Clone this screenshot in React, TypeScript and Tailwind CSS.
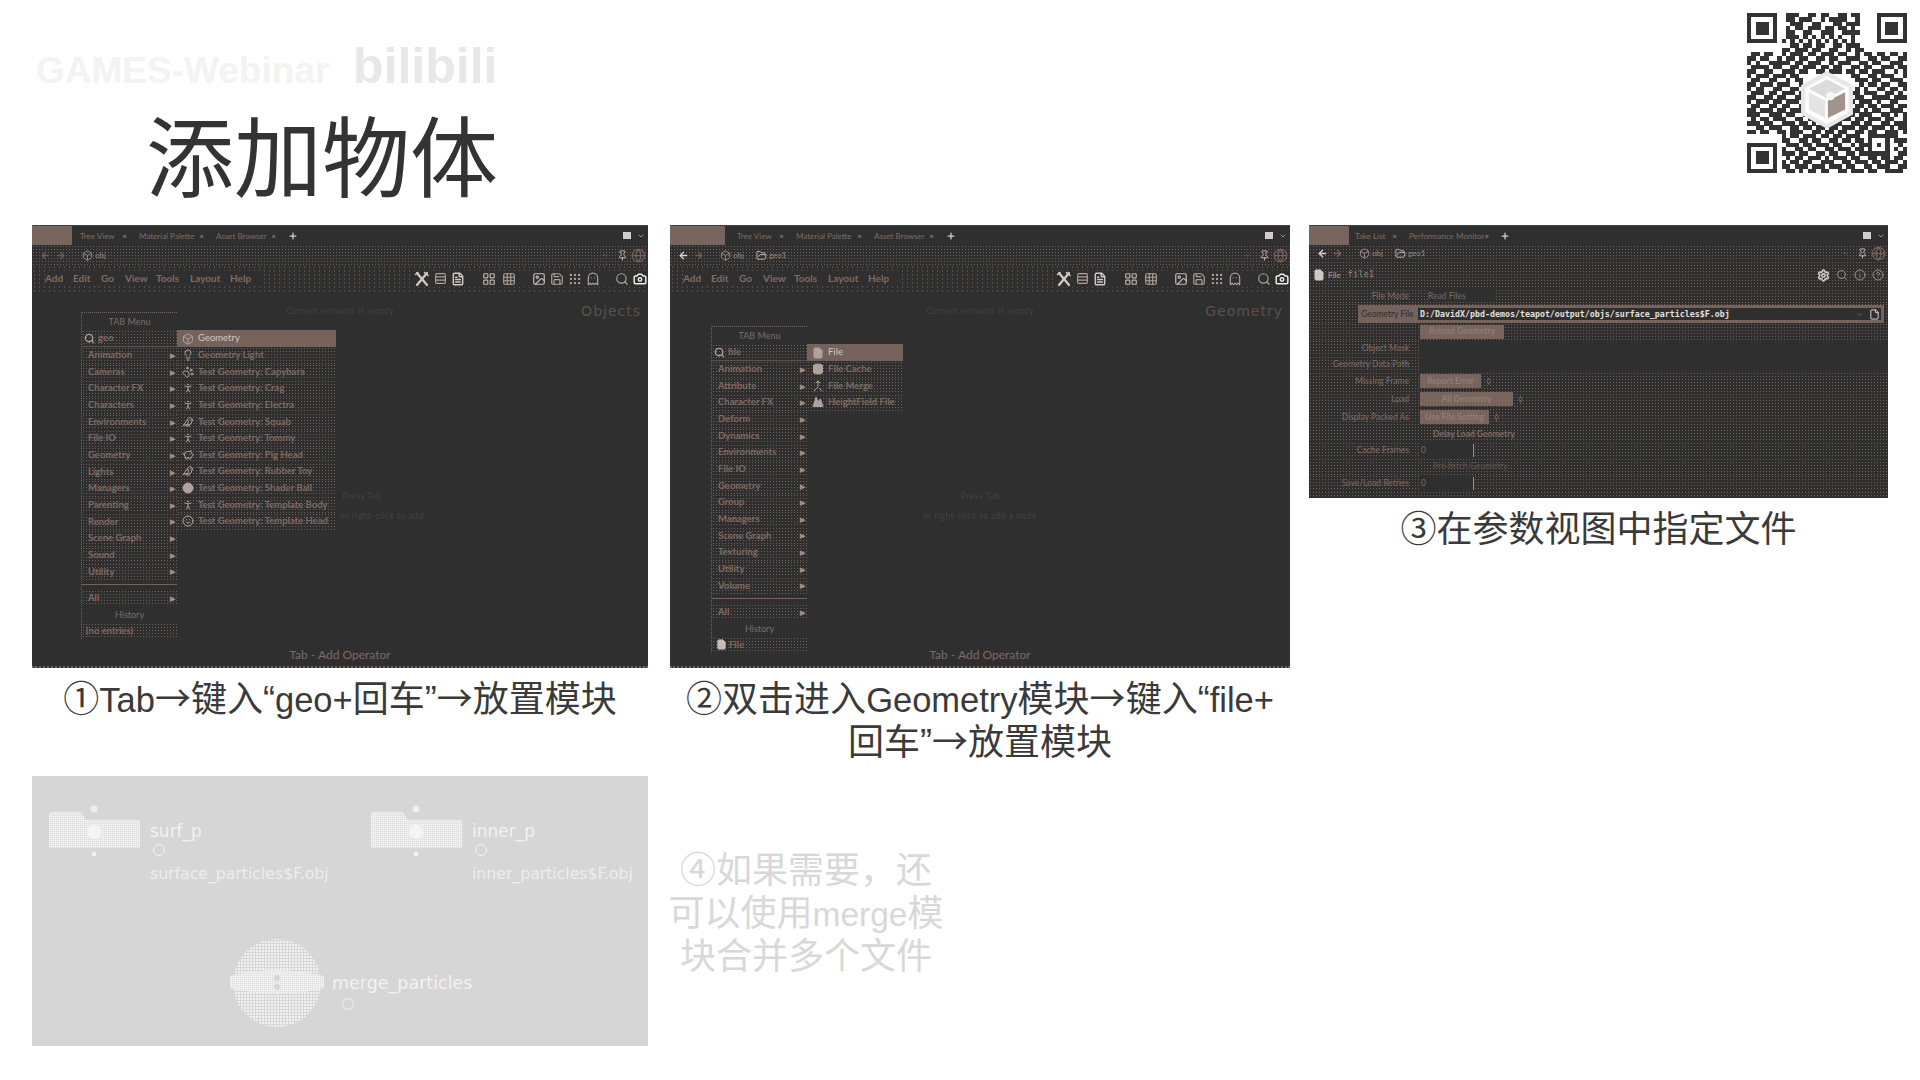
import React from "react";
import {
  Rows3, FileText, LayoutGrid, Grid3x3, Image as ImageIcon, Save, Grip, Ghost, Search, Camera,
  Lightbulb, PawPrint, PersonStanding, Bird, PiggyBank, Circle, Box, Mountain, Smile, FolderOpen,
  Database, Merge, ArrowLeft, ArrowRight, Pin, Globe, Settings, Info, HelpCircle, Plus, ChevronDown, File,
} from "lucide-react";

const cjk = "font-['Liberation_Sans','Noto_Sans_CJK_SC',sans-serif]";
const ui = "font-['Lato',sans-serif]";
const dots = "bg-[radial-gradient(#6f5e57_0.7px,transparent_1px)] bg-[length:3px_3px]";
const dense = "bg-[radial-gradient(#7a675f_0.7px,transparent_0.9px)] bg-[length:2px_2px]";
const sparse = "bg-[radial-gradient(#5f514c_0.6px,transparent_0.9px)] bg-[length:5px_4px]";

const qrRows = [
  "0000000001110011011001101100000000000",
  "0000000001101110010111100100000000000",
  "0000000000111001100011011100000000000",
  "0000000001011011101101101000000000000",
  "0000000001100110011100111100000000000",
  "0000000001110101010101001000000000000",
  "0000000010101010101010101000000000000",
  "0000000000110110110011011100000000000",
  "0000000011011101100110010110000000000",
  "0110110010111011011101100101101101101",
  "1101100101101100110110011100110110011",
  "1010011111011011100101110011011001110",
  "0111101100110111011011001101100111011",
  "1100110011101100110111011011011100101",
  "1011101110110000000000001100110111001",
  "0110011001011000000000000111011001110",
  "1101110111001000000000000010110110011",
  "1011001100110000000000000101001101101",
  "0111011011101000000000001101110011010",
  "1100110110011000000000000110011110111",
  "1011101101110000000000001011101001100",
  "0110011011001000000000000110110111011",
  "1101110110111000000000001101011001110",
  "1110011101100110000000011011100110101",
  "0101101110011011101101110110111011001",
  "1110110011101101011011001101100110111",
  "0011011100110110110110111011011101011",
  "1101100110111001101101100110110011101",
  "0000000010110111011011011100111111100",
  "0000000011001101100110110110100010111",
  "0000000001110110111011001011101010010",
  "0000000010011011001101110110100010101",
  "0000000011101100110110011011111110011",
  "0000000001011011101011101100110110110",
  "0000000010110110011100110111011011101",
  "0000000011011101110111011001101110011",
  "0000000001101011011001101110110011110",
];

function QR() {
  const n = 37;
  const cells: React.ReactNode[] = [];
  qrRows.forEach((row, y) =>
    row.split("").forEach((c, x) => {
      if (c === "1") cells.push(<rect key={`${x}-${y}`} x={x} y={y} width={1.02} height={1.02} />);
    })
  );
  const finder = (x: number, y: number) => (
    <g key={`f${x}${y}`}>
      <path fillRule="evenodd" d={`M${x} ${y}h7v7h-7zM${x + 1} ${y + 1}v5h5v-5z`} />
      <rect x={x + 2} y={y + 2} width={3} height={3} />
    </g>
  );
  return (
    <svg viewBox={`0 0 ${n} ${n}`} className="absolute top-[13px] left-[1747px] w-[160px] h-[160px]" fill="#333333" shapeRendering="crispEdges">
      {cells}
      {finder(0, 0)}
      {finder(30, 0)}
      {finder(0, 30)}
      <g shapeRendering="auto">
        <path d="M18.5 14l5.5 3v6.2l-5.5 3-5.5-3V17z" fill="#ffffff" stroke="#e8e8e8" strokeWidth="1" />
        <path d="M18.5 15.3l4.2 2.2-4.2 2.2-4.2-2.2z" fill="#dcdcdc" />
        <path d="M14.3 18.3l3.8 2v4l-3.8-2z" fill="#e4e4e4" />
        <path d="M22.7 18.3l-4 2v4l4-2z" fill="#a3938d" />
        <circle cx="19.3" cy="19.2" r="1" fill="#f6f6f6" />
      </g>
    </svg>
  );
}

function Arrow() {
  return <span className="font-['Noto_Sans_CJK_SC',sans-serif] leading-none">→</span>;
}

function Latin({ children }: { children: React.ReactNode }) {
  return <span className="text-[34.5px] leading-none">{children}</span>;
}

function CrossedTools() {
  return (
    <svg width="16" height="16" viewBox="0 0 16 16" fill="none" stroke="#d4ccc8" strokeWidth="2.2" strokeLinecap="round" className="shrink-0">
      <path d="M3 2l10 12" />
      <path d="M13 2L3 14" />
      <path d="M10.5 1.5l3.5 3" strokeWidth="1.6" />
      <path d="M1.5 3.5L4 1.5" strokeWidth="1.6" />
    </svg>
  );
}

type TabDef = { label: string; w: number };

function TabBar({ first, pad, tabs }: { first: number; pad: number; tabs: TabDef[] }) {
  return (
    <div className={`flex items-center h-[20px] shrink-0 border-t border-dotted border-[#5f514c] ${ui} text-[8px] text-[#7f6b63]`}>
      <div className={`h-full ${dense}`} style={{ width: first }} />
      <div style={{ width: pad }} />
      {tabs.map((t) => (
        <div key={t.label} className="flex items-center" style={{ width: t.w }}>
          <span className="whitespace-nowrap">{t.label}</span>
          <span className="ml-auto mr-[12px] text-[8px] text-[#a08c84]">×</span>
        </div>
      ))}
      <Plus size={10} strokeWidth={3} className="text-[#d8d0cc]" />
      <div className="ml-auto w-[8px] h-[7px] bg-[#d4ccc8]" />
      <ChevronDown size={8} strokeWidth={3} className="ml-[6px] mr-[3px] text-[#a09088]" />
    </div>
  );
}

function PathBar({ items, bright, h }: { items: string[]; bright?: boolean; h: number }) {
  return (
    <div className={`flex items-center shrink-0 pl-[8px] ${dots} ${ui} text-[8px] text-[#9a8880]`} style={{ height: h }}>
      <ArrowLeft size={11} strokeWidth={3} className={bright ? "text-[#d8d0cc]" : "text-[#6f5e57]"} />
      <ArrowRight size={11} strokeWidth={3} className="ml-[4px] text-[#6f5e57]" />
      <div className="w-[16px]" />
      {items.map((it, i) => (
        <div key={it} className="flex items-center mr-[12px]">
          {i === 0 ? <Box size={11} className="text-[#a08c84]" /> : <FolderOpen size={11} className="text-[#c8bcb6]" />}
          <span className="ml-[2px]">{it}</span>
        </div>
      ))}
      <ChevronDown size={7} strokeWidth={3} className="ml-auto text-[#75625b]" />
      <Pin size={11} className="ml-[8px] text-[#c8bcb6]" />
      <Globe size={15} className="ml-[3px] mr-[2px] text-[#75625b]" />
    </div>
  );
}

const menuItems: [string, number][] = [
  ["Add", 28],
  ["Edit", 28],
  ["Go", 24],
  ["View", 31],
  ["Tools", 34],
  ["Layout", 40],
  ["Help", 30],
];

function MenuBar() {
  return (
    <div className={`flex items-center h-[27px] shrink-0 pl-[13px] pr-[1px] ${sparse} ${ui} text-[10px] font-bold text-[#7f6b63]`}>
      {menuItems.map(([m, w]) => (
        <span key={m} className="bg-[#2f2f2f]" style={{ width: w }}>
          {m}
        </span>
      ))}
      <div className="ml-auto flex items-center text-[#b0a29c] bg-[#2f2f2f]">
        <CrossedTools />
        <Rows3 size={13} className="ml-[4px]" />
        <FileText size={14} strokeWidth={2.5} className="ml-[4px] text-[#d0c8c4]" />
        <LayoutGrid size={14} className="ml-[17px] text-[#c0b4ae]" />
        <Grid3x3 size={14} className="ml-[6px]" />
        <ImageIcon size={14} className="ml-[16px] text-[#c8bcb6]" />
        <Save size={14} className="ml-[4px]" />
        <Grip size={14} className="ml-[4px]" />
        <Ghost size={14} className="ml-[4px]" />
        <Search size={14} className="ml-[15px]" />
        <Camera size={14} strokeWidth={2.5} className="ml-[4px] text-[#f0ecea]" />
      </div>
    </div>
  );
}

type SubItem = { label: string; icon: React.ReactNode };

function TabMenu({
  search, rows, last, sub, subW,
}: { search: string; rows: string[]; last: React.ReactNode; sub: SubItem[]; subW: number }) {
  return (
    <div className={`flex ${ui} text-[9.5px] font-bold text-[#7f6b63]`}>
      <div className="w-[96px] border-l border-dotted border-[#75625b]">
        <div className="h-[18px] flex items-center justify-center border-t border-dotted border-[#75625b] text-[9px] font-normal">TAB Menu</div>
        <div className={`h-[17px] flex items-center pl-[2px] border-b border-[#5f514c] ${dots}`}>
          <Search size={11} strokeWidth={3} className="text-[#b0a29c]" />
          <span className="ml-[3px]">{search}</span>
        </div>
        {rows.map((r) => (
          <div key={r} className={`h-[16.65px] flex items-center pl-[6px] pr-[2px] ${dots}`}>
            <span>{r}</span>
            <span className="ml-auto text-[7px] text-[#a08c84]">▶</span>
          </div>
        ))}
        <div className="mt-[4px] h-px bg-[#75625b]" />
        <div className={`mt-[5px] h-[16px] flex items-center pl-[6px] pr-[2px] ${dots}`}>
          <span>All</span>
          <span className="ml-auto text-[7px] text-[#a08c84]">▶</span>
        </div>
        <div className="h-[17px] flex items-center justify-center text-[9px] font-normal">History</div>
        <div className={`h-[16px] flex items-center pl-[4px] ${dots}`}>{last}</div>
      </div>
      <div className="mt-[18px]" style={{ width: subW }}>
        {sub.map((s, i) => (
          <div
            key={s.label}
            className={i === 0 ? "h-[17px] flex items-center pl-[5px] bg-[#75625b] text-[#cfc6c2] font-normal" : `h-[16.6px] flex items-center pl-[5px] ${dots}`}
          >
            <span className="w-[16px] flex items-center text-[#b0a29c]">{s.icon}</span>
            <span className="whitespace-nowrap">{s.label}</span>
          </div>
        ))}
      </div>
    </div>
  );
}

function NetPanel({
  tabs, first, pad, path, bright, title, menuLeft, menuTop, menu, hints,
}: {
  tabs: TabDef[]; first: number; pad: number; path: string[]; bright?: boolean; title: string;
  menuLeft: number; menuTop: number; menu: React.ReactNode; hints: { top: number; cx: number; text: string }[];
}) {
  return (
    <div className="h-[443px] bg-[#2f2f2f] flex flex-col">
      <TabBar first={first} pad={pad} tabs={tabs} />
      <PathBar items={path} bright={bright} h={20} />
      <MenuBar />
      <div className="relative flex-1 flex flex-col items-center justify-end pb-[2px] border-b-2 border-dotted border-[#75625b]">
        <div className={`${ui} text-[12px] text-[#7f6b63]`}>Tab - Add Operator</div>
        <div className="absolute right-[7px] top-[9px] font-['DejaVu_Sans',sans-serif] text-[14px] tracking-[1px] text-[#5c504b]">{title}</div>
        {hints.map((h) => (
          <div
            key={h.text}
            className={`absolute -translate-x-1/2 whitespace-nowrap ${ui} text-[8.5px] tracking-[0.5px] text-[#47423f]`}
            style={{ top: h.top, left: h.cx }}
          >
            {h.text}
          </div>
        ))}
        <div className="absolute" style={{ left: menuLeft, top: menuTop }}>
          {menu}
        </div>
      </div>
    </div>
  );
}

const ic = 12;
const geoSub: SubItem[] = [
  { label: "Geometry", icon: <Box size={ic} /> },
  { label: "Geometry Light", icon: <Lightbulb size={ic} /> },
  { label: "Test Geometry: Capybara", icon: <PawPrint size={ic} /> },
  { label: "Test Geometry: Crag", icon: <PersonStanding size={ic} /> },
  { label: "Test Geometry: Electra", icon: <PersonStanding size={ic} /> },
  { label: "Test Geometry: Squab", icon: <Bird size={ic} /> },
  { label: "Test Geometry: Tommy", icon: <PersonStanding size={ic} /> },
  { label: "Test Geometry: Pig Head", icon: <PiggyBank size={ic} /> },
  { label: "Test Geometry: Rubber Toy", icon: <Bird size={ic} /> },
  { label: "Test Geometry: Shader Ball", icon: <Circle size={ic} fill="currentColor" /> },
  { label: "Test Geometry: Template Body", icon: <PersonStanding size={ic} /> },
  { label: "Test Geometry: Template Head", icon: <Smile size={ic} /> },
];
const fileSub: SubItem[] = [
  { label: "File", icon: <File size={ic} fill="currentColor" /> },
  { label: "File Cache", icon: <Database size={ic} fill="currentColor" /> },
  { label: "File Merge", icon: <Merge size={ic} /> },
  { label: "HeightField File", icon: <Mountain size={ic} fill="currentColor" /> },
];

function ParmRow({ label, h, children, dark }: { label?: string; h: number; children?: React.ReactNode; dark?: boolean }) {
  return (
    <div className={`flex items-center shrink-0 ${dots}`} style={{ height: h }}>
      <div className={`w-[100px] text-right whitespace-nowrap ${ui} text-[8.5px] text-[#7f6b63]`}>{label}</div>
      <div className={`ml-[11px] flex-1 h-full flex items-center ${dark ? "bg-[#2f2f2f]" : ""} ${ui} text-[8.5px] text-[#7f6b63]`}>{children}</div>
    </div>
  );
}

function ParmPanel() {
  return (
    <div className="h-[273px] bg-[#2f2f2f] flex flex-col overflow-hidden">
      <TabBar first={40} pad={6} tabs={[{ label: "Take List", w: 54 }, { label: "Performance Monitor", w: 91 }]} />
      <PathBar items={["obj", "geo1"]} bright h={16} />
      <div className={`h-[28px] shrink-0 flex items-center pl-[4px] pr-[3px] ${dots} ${ui} text-[8px] text-[#9a8880]`}>
        <File size={12} fill="currentColor" className="text-[#d0c8c4]" />
        <span className="ml-[3px] font-bold">File</span>
        <span className="ml-[7px] font-['DejaVu_Sans_Mono',monospace] tracking-[0.5px]">file1</span>
        <Settings size={13} strokeWidth={3} className="ml-auto text-[#d0c8c4]" />
        <Search size={12} className="ml-[6px] text-[#a09088]" />
        <Info size={12} className="ml-[6px] text-[#a09088]" />
        <HelpCircle size={12} className="ml-[6px] mr-[1px] text-[#a09088]" />
      </div>
      <ParmRow label="File Mode" h={14}>
        <span className="ml-[8px] bg-[#2f2f2f] pr-[28px]">Read Files</span>
      </ParmRow>
      <div className={`h-[20px] shrink-0 pl-[49px] pr-[4px] pt-[2px] ${dots}`}>
        <div className="h-[18px] flex items-center bg-[#75625b] px-[3px]">
          <div className={`w-[48px] whitespace-nowrap ${ui} text-[8.5px] text-[#2f2f2f]`}>Geometry File</div>
          <div className="ml-[9px] h-[12px] flex-1 bg-[#2f2f2f] flex items-center pl-[2px] font-['DejaVu_Sans_Mono',monospace] text-[8.3px] font-bold text-[#e4e0dc] whitespace-nowrap">
            D:/DavidX/pbd-demos/teapot/output/objs/surface_particles$F.obj
            <ChevronDown size={7} className="ml-auto mr-[6px] text-[#a09088]" />
            <File size={11} className="mr-[1px] text-[#e4e0dc]" />
          </div>
        </div>
      </div>
      <ParmRow h={17}>
        <div className={`w-[84px] h-[14px] flex items-center justify-center text-[#8f7c74] font-bold ${dense}`}>Reload Geometry</div>
      </ParmRow>
      <ParmRow label="Object Mask" h={16} dark />
      <ParmRow label="Geometry Data Path" h={16} dark />
      <ParmRow label="Missing Frame" h={18}>
        <div className={`w-[61px] h-[14px] flex items-center justify-center text-[#8f7c74] font-bold ${dense}`}>Report Error</div>
        <span className="ml-[5px]">◊</span>
      </ParmRow>
      <ParmRow label="Load" h={18}>
        <div className={`w-[93px] h-[14px] flex items-center justify-center text-[#8f7c74] font-bold ${dense}`}>All Geometry</div>
        <span className="ml-[5px]">◊</span>
      </ParmRow>
      <ParmRow label="Display Packed As" h={18}>
        <div className={`w-[69px] h-[14px] flex items-center justify-center text-[#8f7c74] font-bold ${dense}`}>Use File Setting</div>
        <span className="ml-[5px]">◊</span>
      </ParmRow>
      <ParmRow h={16}>
        <span className="ml-[13px] font-bold">Delay Load Geometry</span>
      </ParmRow>
      <ParmRow label="Cache Frames" h={16}>
        <span className="w-[53px] bg-[#2f2f2f] h-full flex items-center pl-[1px]">0</span>
        <span className="w-px h-[13px] bg-[#a09088]" />
      </ParmRow>
      <ParmRow h={17}>
        <span className="ml-[13px] text-[#5f514c]">Pre-fetch Geometry</span>
      </ParmRow>
      <ParmRow label="Save/Load Retries" h={16}>
        <span className="w-[53px] bg-[#2f2f2f] h-full flex items-center pl-[1px]">0</span>
        <span className="w-px h-[13px] bg-[#a09088]" />
      </ParmRow>
      <div className={`flex-1 ${dots}`} />
    </div>
  );
}

function FolderNode({ left, name, file, id }: { left: number; name: string; file: string; id: string }) {
  return (
    <>
      <svg viewBox="0 0 91 52" className="absolute top-[28px] w-[91px] h-[52px]" style={{ left }}>
        <defs>
          <pattern id={id} width="2" height="2" patternUnits="userSpaceOnUse">
            <rect width="2" height="2" fill="#e4e4e4" />
            <rect width="1" height="1" fill="#fafafa" />
          </pattern>
        </defs>
        <circle cx="45" cy="5" r="3.5" fill="#efefef" />
        <path d="M2 8h30l5 8h52a2 2 0 0 1 2 2v24a2 2 0 0 1-2 2H2a2 2 0 0 1-2-2V10a2 2 0 0 1 2-2z" fill={`url(#${id})`} />
        <circle cx="45" cy="28" r="7" fill="#f4f4f4" />
        <circle cx="45" cy="50" r="2.5" fill="#efefef" />
      </svg>
      <div className="absolute top-[44px] font-['DejaVu_Sans',sans-serif] text-[17px] leading-[22px] text-[#f2f2f2]" style={{ left: left + 101 }}>{name}</div>
      <div className="absolute top-[68px] w-[12px] h-[12px] rounded-full border border-[#f2f2f2]" style={{ left: left + 104 }} />
      <div className="absolute top-[89px] font-['DejaVu_Sans',sans-serif] text-[15.7px] leading-[18px] whitespace-nowrap text-[#ededed]" style={{ left: left + 101 }}>{file}</div>
    </>
  );
}

function GrayPanel() {
  return (
    <div className="relative w-[616px] h-[270px] bg-[#d6d6d6] shrink-0">
      <FolderNode left={17} id="dotA" name="surf_p" file="surface_particles$F.obj" />
      <FolderNode left={339} id="dotB" name="inner_p" file="inner_particles$F.obj" />
      <svg viewBox="0 0 96 90" className="absolute left-[197px] top-[162px] w-[96px] h-[90px]">
        <defs>
          <pattern id="dotS" width="3" height="3" patternUnits="userSpaceOnUse">
            <rect width="3" height="3" fill="#d6d6d6" />
            <rect width="2" height="2" fill="#f2f2f2" />
          </pattern>
          <pattern id="dotT" width="2" height="2" patternUnits="userSpaceOnUse">
            <rect width="2" height="2" fill="#e6e6e6" />
            <rect width="1" height="1" fill="#fafafa" />
          </pattern>
        </defs>
        <ellipse cx="48" cy="45" rx="44" ry="44" fill="url(#dotS)" />
        <path d="M1 38Q48 26 95 38V50Q48 62 1 50z" fill="url(#dotT)" />
        <circle cx="48" cy="40" r="3" fill="#d6d6d6" />
        <circle cx="48" cy="49" r="3" fill="#d6d6d6" />
      </svg>
      <div className="absolute left-[300px] top-[195px] font-['DejaVu_Sans',sans-serif] text-[17.5px] leading-[24px] text-[#f2f2f2]">merge_particles</div>
      <div className="absolute left-[310px] top-[222px] w-[12px] h-[12px] rounded-full border border-[#f2f2f2]" />
    </div>
  );
}

export default function App() {
  return (
    <div className={`relative w-[1920px] h-[1080px] overflow-hidden bg-white ${cjk}`}>
      <div className="absolute left-[36px] top-[52px] font-['Liberation_Sans',sans-serif] font-bold text-[37px] leading-[38px] text-[#f3f3f3]">GAMES-Webinar</div>
      <div className="absolute left-[353px] top-[34px] font-['Liberation_Sans',sans-serif] font-bold text-[50px] leading-[64px] text-[#e8e8e8]">bilibili</div>
      <QR />

      <div className="h-[225px] pl-[146px] pt-[116px]">
        <h1 className="text-[88px] leading-[88px] font-normal text-[#333333]">添加物体</h1>
      </div>

      <div className="h-[551px] flex items-start pl-[32px]">
        <div className="w-[616px] shrink-0">
          <NetPanel
            first={40}
            pad={8}
            tabs={[{ label: "Tree View", w: 59 }, { label: "Material Palette", w: 77 }, { label: "Asset Browser", w: 72 }]}
            path={["obj"]}
            title="Objects"
            menuLeft={49}
            menuTop={20}
            hints={[
              { top: 13, cx: 308, text: "Current network is empty" },
              { top: 198, cx: 330, text: "Press Tab" },
              { top: 218, cx: 350, text: "or right-click to add" },
            ]}
            menu={
              <TabMenu
                search="geo"
                subW={159}
                sub={geoSub}
                last="(no entries)"
                rows={["Animation", "Cameras", "Character FX", "Characters", "Environments", "File IO", "Geometry", "Lights", "Managers", "Parenting", "Render", "Scene Graph", "Sound", "Utility"]}
              />
            }
          />
          <div className="mt-[10px] text-center text-[36px] leading-[43px] text-[#3a3a3a] whitespace-nowrap">
            ①<Latin>Tab</Latin><Arrow />键入“<Latin>geo+</Latin>回车”<Arrow />放置模块
          </div>
        </div>

        <div className="w-[620px] ml-[22px] shrink-0">
          <NetPanel
            first={55}
            pad={12}
            tabs={[{ label: "Tree View", w: 59 }, { label: "Material Palette", w: 78 }, { label: "Asset Browser", w: 72 }]}
            path={["obj", "geo1"]}
            bright
            title="Geometry"
            menuLeft={41}
            menuTop={34}
            hints={[
              { top: 13, cx: 310, text: "Current network is empty" },
              { top: 198, cx: 310, text: "Press Tab" },
              { top: 218, cx: 310, text: "or right-click to add a node" },
            ]}
            menu={
              <TabMenu
                search="file"
                subW={96}
                sub={fileSub}
                last={
                  <span className="flex items-center">
                    <File size={11} fill="currentColor" className="mr-[2px] text-[#c8bcb6]" />
                    File
                  </span>
                }
                rows={["Animation", "Attribute", "Character FX", "Deform", "Dynamics", "Environments", "File IO", "Geometry", "Group", "Managers", "Scene Graph", "Texturing", "Utility", "Volume"]}
              />
            }
          />
          <div className="mt-[10px] text-center text-[36px] leading-[43px] text-[#3a3a3a] whitespace-nowrap">
            ②双击进入<Latin>Geometry</Latin>模块<Arrow />键入“<Latin>file+</Latin>
            <br />
            回车”<Arrow />放置模块
          </div>
        </div>

        <div className="w-[579px] ml-[19px] shrink-0">
          <ParmPanel />
          <div className="mt-[10px] text-center text-[36px] leading-[43px] text-[#3a3a3a] whitespace-nowrap">③在参数视图中指定文件</div>
        </div>
      </div>

      <div className="flex items-start pl-[32px]">
        <GrayPanel />
        <div className="ml-[19px] w-[278px] mt-[73px] text-center text-[36px] leading-[43px] text-[#d8d8d8] whitespace-nowrap">
          ④如果需要，还
          <br />
          可以使用<span className="text-[33.5px] leading-none">merge</span>模
          <br />
          块合并多个文件
        </div>
      </div>
    </div>
  );
}
